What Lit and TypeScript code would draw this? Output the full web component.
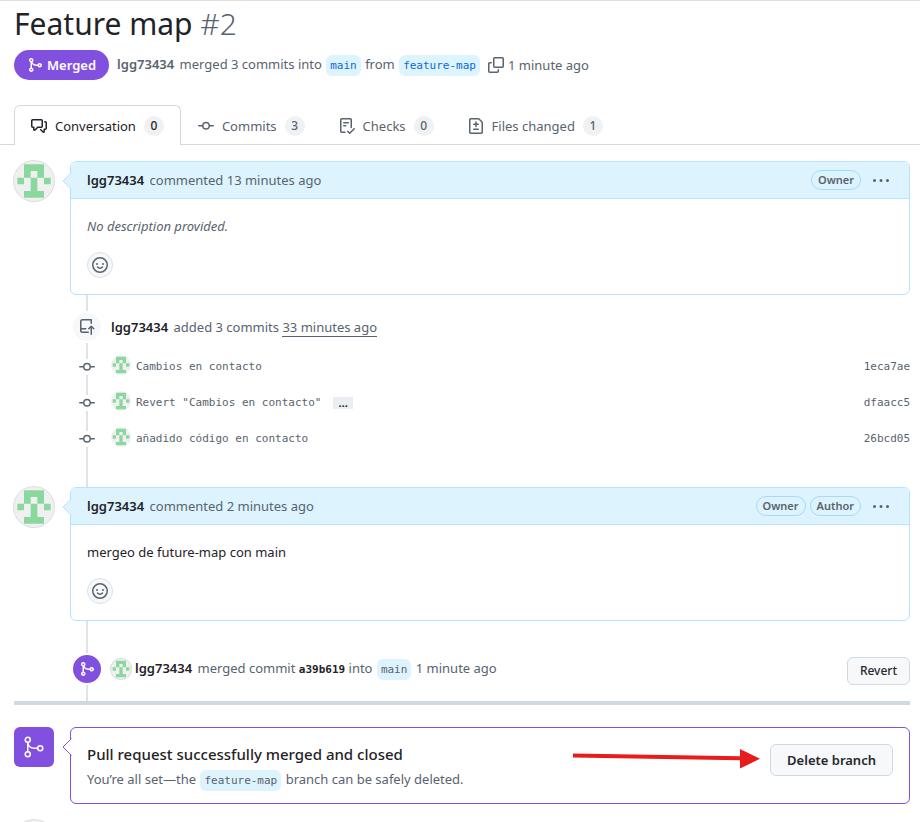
import { LitElement, html, css, svg } from "lit";
import { customElement, property } from "lit/decorators.js";

const PATHS: Record<string, string[]> = {
  merge: [
    "M5.45 5.154A4.25 4.25 0 0 0 9.25 7.5h1.378a2.251 2.251 0 1 1 0 1.5H9.25A5.734 5.734 0 0 1 5 7.123v3.505a2.25 2.25 0 1 1-1.5 0V5.372a2.25 2.25 0 1 1 1.95-.218ZM4.25 13.5a.75.75 0 1 0 0-1.5.75.75 0 0 0 0 1.5Zm8.5-4.5a.75.75 0 1 0 0-1.5.75.75 0 0 0 0 1.5ZM5 3.25a.75.75 0 1 0 0 .005V3.25Z",
  ],
  discussion: [
    "M1.75 1h8.5c.966 0 1.75.784 1.75 1.75v5.5A1.75 1.75 0 0 1 10.25 10H7.061l-2.574 2.573A1.458 1.458 0 0 1 2 11.543V10h-.25A1.75 1.75 0 0 1 0 8.25v-5.5C0 1.784.784 1 1.75 1ZM1.5 2.75v5.5c0 .138.112.25.25.25h1a.75.75 0 0 1 .75.75v2.19l2.72-2.72a.749.749 0 0 1 .53-.22h3.5a.25.25 0 0 0 .25-.25v-5.5a.25.25 0 0 0-.25-.25h-8.5a.25.25 0 0 0-.25.25Zm13 2a.25.25 0 0 0-.25-.25h-.5a.75.75 0 0 1 0-1.5h.5c.966 0 1.75.784 1.75 1.75v5.5A1.75 1.75 0 0 1 14.25 12H14v1.543a1.458 1.458 0 0 1-2.487 1.03L9.22 12.28a.749.749 0 0 1 .326-1.275.749.749 0 0 1 .734.215l2.22 2.22v-2.19a.75.75 0 0 1 .75-.75h1a.25.25 0 0 0 .25-.25Z",
  ],
  commit: [
    "M11.93 8.5a4.002 4.002 0 0 1-7.86 0H.75a.75.75 0 0 1 0-1.5h3.32a4.002 4.002 0 0 1 7.86 0h3.32a.75.75 0 0 1 0 1.5Zm-1.43-.75a2.5 2.5 0 1 0-5 0 2.5 2.5 0 0 0 5 0Z",
  ],
  checks: [
    "M2.5 1.75v11.5c0 .138.112.25.25.25h3.17a.75.75 0 0 1 0 1.5H2.75A1.75 1.75 0 0 1 1 13.25V1.75C1 .784 1.784 0 2.75 0h8.5C12.216 0 13 .784 13 1.75v7.736a.75.75 0 0 1-1.5 0V1.75a.25.25 0 0 0-.25-.25h-8.5a.25.25 0 0 0-.25.25Zm13.274 9.537v-.001l-4.557 4.45a.75.75 0 0 1-1.055-.008l-1.943-1.95a.75.75 0 0 1 1.062-1.058l1.419 1.425 4.026-3.932a.75.75 0 1 1 1.048 1.074ZM4.75 4h4.5a.75.75 0 0 1 0 1.5h-4.5a.75.75 0 0 1 0-1.5ZM4 7.75A.75.75 0 0 1 4.75 7h2a.75.75 0 0 1 0 1.5h-2A.75.75 0 0 1 4 7.75Z",
  ],
  diff: [
    "M1 1.75C1 .784 1.784 0 2.75 0h7.586c.464 0 .909.184 1.237.513l2.914 2.914c.329.328.513.773.513 1.237v9.586A1.75 1.75 0 0 1 13.25 16H2.75A1.75 1.75 0 0 1 1 14.25Zm1.75-.25a.25.25 0 0 0-.25.25v12.5c0 .138.112.25.25.25h10.5a.25.25 0 0 0 .25-.25V4.664a.25.25 0 0 0-.073-.177l-2.914-2.914a.25.25 0 0 0-.177-.073ZM8 3.25a.75.75 0 0 1 .75.75v1.5h1.5a.75.75 0 0 1 0 1.5h-1.5v1.5a.75.75 0 0 1-1.5 0V7h-1.5a.75.75 0 0 1 0-1.5h1.5V4A.75.75 0 0 1 8 3.25Zm-3 8a.75.75 0 0 1 .75-.75h4.5a.75.75 0 0 1 0 1.5h-4.5a.75.75 0 0 1-.75-.75Z",
  ],
  copy: [
    "M0 6.75C0 5.784.784 5 1.75 5h1.5a.75.75 0 0 1 0 1.5h-1.5a.25.25 0 0 0-.25.25v7.5c0 .138.112.25.25.25h7.5a.25.25 0 0 0 .25-.25v-1.5a.75.75 0 0 1 1.5 0v1.5A1.75 1.75 0 0 1 9.25 16h-7.5A1.75 1.75 0 0 1 0 14.25Z",
    "M5 1.75C5 .784 5.784 0 6.75 0h7.5C15.216 0 16 .784 16 1.75v7.5A1.75 1.75 0 0 1 14.25 11h-7.5A1.75 1.75 0 0 1 5 9.25Zm1.75-.25a.25.25 0 0 0-.25.25v7.5c0 .138.112.25.25.25h7.5a.25.25 0 0 0 .25-.25v-7.5a.25.25 0 0 0-.25-.25Z",
  ],
  push: [
    "M1 2.5A2.5 2.5 0 0 1 3.5 0h8.75a.75.75 0 0 1 .75.75v3.5a.75.75 0 0 1-1.5 0V1.5h-8a1 1 0 0 0-1 1v6.708A2.493 2.493 0 0 1 3.5 9h3.25a.75.75 0 0 1 0 1.5H3.5a1 1 0 0 0 0 2h5.75a.75.75 0 0 1 0 1.5H3.5A2.5 2.5 0 0 1 1 11.5Zm13.23 7.79-1.225-1.224v6.184a.75.75 0 0 1-1.5 0V9.066L10.28 10.29a.75.75 0 0 1-1.06-1.061l2.505-2.504a.75.75 0 0 1 1.06 0L15.29 9.23a.751.751 0 0 1-.018 1.042.751.751 0 0 1-1.042.018Z",
  ],
  kebab: [
    "M8 10a1.5 1.5 0 1 0 0-3 1.5 1.5 0 0 0 0 3ZM1.5 10a1.5 1.5 0 1 0 0-3 1.5 1.5 0 0 0 0 3Zm13 0a1.5 1.5 0 1 0 0-3 1.5 1.5 0 0 0 0 3Z",
  ],
};

const icon = (name: string) => html`<svg class="icon" viewBox="0 0 16 16" width="16" height="16" aria-hidden="true">
  ${PATHS[name].map((d) => svg`<path fill="currentColor" d=${d}></path>`)}
</svg>`;

const smiley = html`<svg class="icon" viewBox="0 0 16 16" width="16" height="16" fill="none" aria-hidden="true">
  <circle cx="8" cy="8" r="7.25" stroke="currentColor" stroke-width="1.5"></circle>
  <circle cx="5" cy="7" r="1" fill="currentColor"></circle>
  <circle cx="11" cy="7" r="1" fill="currentColor"></circle>
  <path d="M5.5 10.1c.6.7 1.4 1.1 2.5 1.1s1.9-.4 2.5-1.1" stroke="currentColor" stroke-width="1.5" stroke-linecap="round"></path>
</svg>`;

const bigMerge = html`<svg viewBox="0 0 24 24" width="24" height="24" fill="none" stroke="currentColor" stroke-width="1.5" aria-hidden="true">
  <circle cx="5.75" cy="4.75" r="2.5"></circle>
  <circle cx="5.75" cy="19.25" r="2.5"></circle>
  <circle cx="18.25" cy="13.25" r="2.5"></circle>
  <path d="M5.75 7.25v9.5M5.75 7.5c.5 3.5 3.2 5.75 6.5 5.75h3.5"></path>
</svg>`;

const caret = html`<svg class="caret" viewBox="0 0 10 18" width="10" height="18" aria-hidden="true">
  <path class="caret-shape" d="M9.5 .5 1 9l8.5 8.5"></path>
</svg>`;

const IDENTICON = [".###.", ".#.#.", "#.#.#", "..#..", ".###."];

/** Five by five identicon of the account, cropped to a circle. */
@customElement("user-avatar")
export class UserAvatar extends LitElement {
  @property({ type: Boolean }) ring = false;

  static styles = css`
    :host {
      display: block;
      flex: none;
      border-radius: 50%;
      overflow: hidden;
      background: #f0f0f0;
    }
    :host([ring]) {
      box-shadow: 0 0 0 1px #dcdfe2;
    }
    svg {
      display: block;
      width: 100%;
      height: 100%;
    }
  `;

  render() {
    const cells = IDENTICON.flatMap((row, y) =>
      [...row].map((c, x) => (c === "#" ? `M${x * 2 + 1} ${y * 2 + 1}h2v2h-2z` : "")),
    ).join("");
    return html`<svg viewBox="0 0 12 12" role="img" aria-label="lgg73434">
      <path fill="#8ad89e" d=${cells}></path>
    </svg>`;
  }
}

@customElement("app-root")
export class AppRoot extends LitElement {
  private tabs = [
    { icon: "discussion", label: "Conversation", count: 0, selected: true },
    { icon: "commit", label: "Commits", count: 3, selected: false },
    { icon: "checks", label: "Checks", count: 0, selected: false },
    { icon: "diff", label: "Files changed", count: 1, selected: false },
  ];

  private commits = [
    { message: "Cambios en contacto", sha: "1eca7ae", more: false },
    { message: 'Revert "Cambios en contacto"', sha: "dfaacc5", more: true },
    { message: "añadido código en contacto", sha: "26bcd05", more: false },
  ];

  static styles = css`
    :host {
      display: block;
      color: #1f2328;
      background: #fff;
      border-top: 1px solid #dfdfdf;
      font-family: "Noto Sans", "Open Sans", sans-serif;
      font-size: 13px;
      line-height: 20px;
    }
    * {
      box-sizing: border-box;
    }
    h1, h2, p, ul {
      margin: 0;
      padding: 0;
    }
    a {
      color: inherit;
      text-decoration: none;
    }
    button {
      font: inherit;
      color: inherit;
      padding: 0;
      border: 0;
      background: none;
    }
    .icon {
      display: block;
      flex: none;
    }
    .head {
      padding: 3px 10px 0 14px;
    }
    h1 {
      font-size: 30px;
      line-height: 40px;
      font-weight: 400;
    }
    .number {
      font-weight: 300;
      color: #59636e;
    }
    .meta {
      display: flex;
      align-items: center;
      margin-top: 6px;
      color: #59636e;
      white-space: nowrap;
    }
    .state {
      display: flex;
      align-items: center;
      gap: 4px;
      height: 30px;
      padding: 0 13px;
      margin-right: 8px;
      border-radius: 15px;
      background: #8250df;
      color: #fff;
      font-weight: 600;
    }
    .meta b {
      margin-right: 2px;
      font-weight: 600;
    }
    .chip {
      display: inline-block;
      padding: 0 4px;
      margin: 0 1px;
      border-radius: 6px;
      background: #ddf4ff;
      color: #59636e;
      font: 11px/21px "DejaVu Sans Mono", monospace;
    }
    .chip.link {
      color: #0969da;
    }
    .copy {
      padding: 0 4px 0 7px;
    }
    .tabs {
      display: flex;
      margin-top: 25px;
      padding-left: 14px;
      box-shadow: inset 0 -1px #d1d9e0;
      white-space: nowrap;
    }
    .tab {
      display: flex;
      align-items: center;
      gap: 8px;
      height: 40px;
      padding: 0 16px;
      border: 1px solid transparent;
      border-bottom: 0;
      color: #59636e;
    }
    .tab.selected {
      color: #1f2328;
      background: #fff;
      border-color: #d1d9e0;
      border-radius: 6px 6px 0 0;
    }
    .count {
      min-width: 20px;
      border-radius: 10px;
      background: #eff1f3;
      font-size: 12px;
      font-weight: 500;
      text-align: center;
    }
    .thread {
      padding: 16px 10px 0 14px;
    }
    .row {
      display: grid;
      grid-template-columns: 40px minmax(0, 1fr);
      column-gap: 16px;
    }
    .avatar-lg {
      width: 40px;
      height: 40px;
    }
    .avatar-sm {
      width: 20px;
      height: 20px;
    }
    .card {
      position: relative;
      border: 1px solid #b6e3ff;
      border-radius: 6px;
      background: #fff;
    }
    .caret {
      position: absolute;
      left: -9px;
      top: 10px;
    }
    .caret-shape {
      fill: #ddf4ff;
      stroke: #b6e3ff;
    }
    .result .caret-shape {
      fill: #fff;
      stroke: #8250df;
    }
    .card-head {
      display: flex;
      align-items: center;
      gap: 4px;
      height: 37px;
      padding: 0 16px;
      border-bottom: 1px solid #b6e3ff;
      border-radius: 5px 5px 0 0;
      background: #ddf4ff;
      color: #59636e;
    }
    .who {
      margin-right: 2px;
      font-weight: 600;
      color: #1f2328;
    }
    .said {
      flex: 1;
    }
    .badge {
      padding: 0 6px;
      border: 1px solid #a5dafd;
      border-radius: 10px;
      font-size: 11px;
      line-height: 18px;
      font-weight: 600;
    }
    .menu {
      padding: 0 4px 0 8px;
    }
    .card-body {
      display: flex;
      flex-direction: column;
      align-items: flex-start;
      gap: 15px;
      padding: 17px 16px 16px;
      line-height: 21px;
    }
    .empty {
      font-style: italic;
      color: #59636e;
    }
    .react {
      display: grid;
      place-items: center;
      width: 26px;
      height: 26px;
      border: 1px solid #dde2e7;
      border-radius: 50%;
      background: #f6f8fa;
      color: #59636e;
    }
    .events {
      margin-left: 56px;
      padding: 16px 0 30px;
      background: linear-gradient(#dfe3e8, #dfe3e8) 16px 0 / 2px 100% no-repeat;
    }
    .events.last {
      padding: 32px 0 16px;
    }
    .event {
      display: flex;
      align-items: center;
      color: #59636e;
    }
    .dot {
      display: grid;
      place-items: center;
      width: 32px;
      height: 32px;
      margin: 0 8px 0 1px;
      border: 2px solid #fff;
      border-radius: 50%;
      background: #f6f8fa;
    }
    .dot-wrap {
      background: #fff;
    }
    .dot.merged {
      background: #8250df;
      color: #fff;
    }
    .line {
      flex: 1;
      white-space: nowrap;
    }
    .when {
      border-bottom: 1px solid #59636e;
    }
    .commits {
      list-style: none;
      margin-top: 6px;
    }
    .commit {
      display: flex;
      align-items: center;
      height: 36px;
      color: #59636e;
      font: 11px/20px "DejaVu Sans Mono", monospace;
    }
    .node {
      margin: 0 16px 0 9px;
      background: #fff;
    }
    .commit .avatar-sm {
      margin: 0 5px 4px 0;
    }
    .message {
      display: flex;
      align-items: center;
      gap: 12px;
      flex: 1;
    }
    .more {
      height: 12px;
      padding: 0 5px;
      background: #eaeef2;
      color: #1f2328;
      font: 700 11px/4px "Noto Sans", sans-serif;
    }
    .sha-bold {
      font: 700 11px/20px "DejaVu Sans Mono", monospace;
      color: #1f2328;
    }
    .last .avatar-sm {
      margin-right: 4px;
    }
    .btn {
      border: 1px solid #d1d9e0;
      border-radius: 6px;
      background: #f6f8fa;
      color: #25292e;
      font-weight: 500;
      white-space: nowrap;
    }
    .btn.small {
      height: 28px;
      padding: 0 12px;
      margin-top: 4px;
      font-size: 12px;
    }
    .btn.medium {
      height: 32px;
      padding: 0 16px;
      font-weight: 600;
    }
    .rule {
      height: 4px;
      margin: 0 0 22px;
      border: 0;
      background: #d1d9e0;
    }
    .result {
      margin-bottom: 16px;
    }
    .result .card {
      display: flex;
      align-items: flex-start;
      padding: 16px 16px 12px;
      border-color: #8250df;
    }
    .tile {
      display: grid;
      place-items: center;
      width: 40px;
      height: 40px;
      border-radius: 6px;
      background: #8250df;
      color: #fff;
    }
    .summary {
      flex: 1;
    }
    h2 {
      font-size: 15px;
      line-height: 20px;
      font-weight: 500;
    }
    .summary p {
      margin-top: 3px;
      line-height: 24px;
      color: #59636e;
    }
    .arrow {
      position: absolute;
      right: 147px;
      top: 19px;
    }
  `;

  private comment(when: string, badges: string[], text: string, empty: boolean) {
    return html`<article class="row">
      <user-avatar class="avatar-lg" ring></user-avatar>
      <div class="card">
        <header class="card-head">
          <span class="said"><a class="who" href="#">lgg73434</a> commented <a href="#">${when}</a></span>
          ${badges.map((b) => html`<span class="badge">${b}</span>`)}
          <button class="menu" aria-label="Show options">${icon("kebab")}</button>
        </header>
        ${caret}
        <div class="card-body">
          <p class=${empty ? "empty" : "text"}>${text}</p>
          <button class="react" aria-label="Add a reaction">${smiley}</button>
        </div>
      </div>
    </article>`;
  }

  render() {
    return html`
      <header class="head">
        <h1>Feature map <span class="number">#2</span></h1>
        <div class="meta">
          <span class="state">${icon("merge")} Merged</span>
          <span>
            <b>lgg73434</b> merged 3 commits into <a class="chip link" href="#">main</a> from
            <a class="chip link" href="#">feature-map</a>
          </span>
          <button class="copy" aria-label="Copy branch name">${icon("copy")}</button>
          <span>1 minute ago</span>
        </div>
      </header>

      <nav class="tabs" aria-label="Pull request">
        ${this.tabs.map(
          (t) => html`<a class="tab ${t.selected ? "selected" : ""}" href="#">
            ${icon(t.icon)}<span>${t.label}</span><span class="count">${t.count}</span>
          </a>`,
        )}
      </nav>

      <main class="thread">
        ${this.comment("13 minutes ago", ["Owner"], "No description provided.", true)}

        <section class="events">
          <div class="event">
            <span class="dot-wrap"><span class="dot">${icon("push")}</span></span>
            <span class="line">
              <a class="who" href="#">lgg73434</a> added 3 commits <a class="when" href="#">33 minutes ago</a>
            </span>
          </div>
          <ul class="commits">
            ${this.commits.map(
              (c) => html`<li class="commit">
                <span class="node">${icon("commit")}</span>
                <user-avatar class="avatar-sm"></user-avatar>
                <span class="message">
                  <a href="#">${c.message}</a>
                  ${c.more ? html`<button class="more" aria-label="Show full message">…</button>` : ""}
                </span>
                <a href="#">${c.sha}</a>
              </li>`,
            )}
          </ul>
        </section>

        ${this.comment("2 minutes ago", ["Owner", "Author"], "mergeo de future-map con main", false)}

        <section class="events last">
          <div class="event">
            <span class="dot-wrap"><span class="dot merged">${icon("merge")}</span></span>
            <user-avatar class="avatar-sm" ring></user-avatar>
            <span class="line">
              <a class="who" href="#">lgg73434</a> merged commit <a class="sha-bold" href="#">a39b619</a> into
              <span class="chip">main</span> 1 minute ago
            </span>
            <button class="btn small">Revert</button>
          </div>
        </section>

        <hr class="rule" />

        <section class="row result">
          <span class="tile">${bigMerge}</span>
          <div class="card">
            ${caret}
            <div class="summary">
              <h2>Pull request successfully merged and closed</h2>
              <p>You’re all set—the <span class="chip">feature-map</span> branch can be safely deleted.</p>
            </div>
            <svg class="arrow" viewBox="0 0 190 22" width="190" height="22" aria-hidden="true">
              <path fill="#e81c1c" d="M1 6.5 168 9.2V2l20 9.8-20 9.7v-8.3L1 10.5z"></path>
            </svg>
            <button class="btn medium">Delete branch</button>
          </div>
        </section>

        <div class="row">
          <user-avatar class="avatar-lg" ring></user-avatar>
        </div>
      </main>
    `;
  }
}
